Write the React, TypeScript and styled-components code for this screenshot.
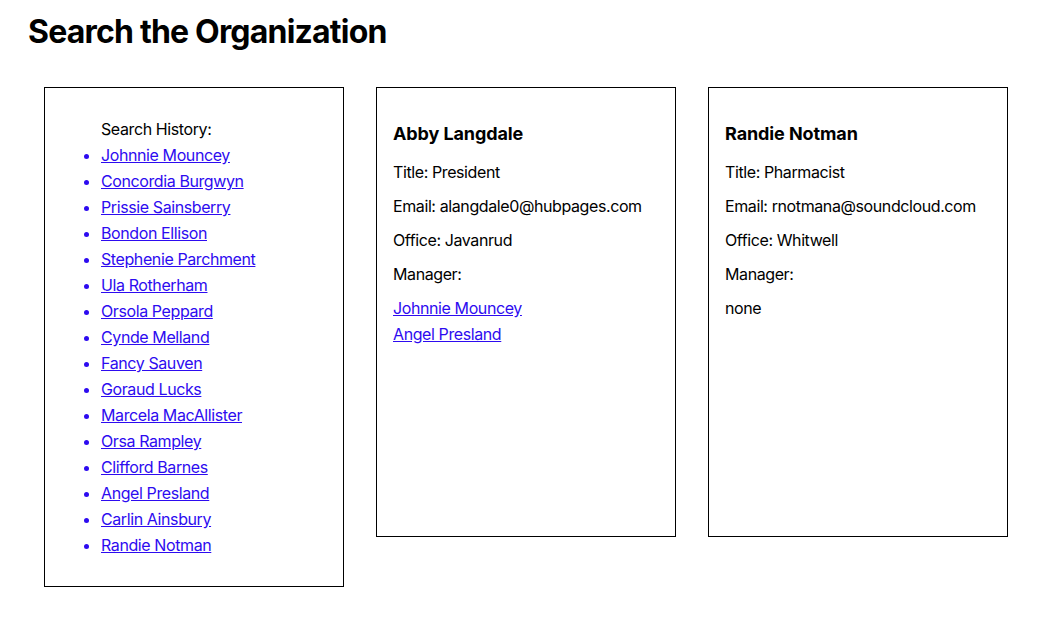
import React from "react";
import styled, { createGlobalStyle } from "styled-components";

interface Employee {
  name: string;
  title: string;
  email: string;
  office: string;
  managers: string[];
}

const history = [
  "Johnnie Mouncey",
  "Concordia Burgwyn",
  "Prissie Sainsberry",
  "Bondon Ellison",
  "Stephenie Parchment",
  "Ula Rotherham",
  "Orsola Peppard",
  "Cynde Melland",
  "Fancy Sauven",
  "Goraud Lucks",
  "Marcela MacAllister",
  "Orsa Rampley",
  "Clifford Barnes",
  "Angel Presland",
  "Carlin Ainsbury",
  "Randie Notman",
];

const employees: Employee[] = [
  {
    name: "Abby Langdale",
    title: "President",
    email: "alangdale0@hubpages.com",
    office: "Javanrud",
    managers: ["Johnnie Mouncey", "Angel Presland"],
  },
  {
    name: "Randie Notman",
    title: "Pharmacist",
    email: "rnotmana@soundcloud.com",
    office: "Whitwell",
    managers: [],
  },
];

const GlobalStyle = createGlobalStyle`
  body {
    margin: 0;
    background: #ffffff;
    color: #000000;
    font-family: Inter, "Noto Sans", sans-serif;
    font-size: 16px;
    letter-spacing: -0.4px;
  }
`;

const Page = styled.div`
  padding: 12px 28px;
`;

const Heading = styled.h1`
  margin: 0 0 35px;
  font-size: 32px;
  line-height: 40px;
  font-weight: 700;
  letter-spacing: -0.8px;
`;

const CardRow = styled.div`
  display: flex;
  align-items: flex-start;
  gap: 32px;
  padding-left: 16px;
`;

const Card = styled.div<{ $height: number }>`
  box-sizing: border-box;
  width: 300px;
  height: ${(p) => p.$height}px;
  border: 1px solid #000000;
  padding: 17px 16px 16px;
`;

const HistoryList = styled.ul`
  margin: 11px 0 0;
  padding-left: 40px;
  line-height: 26px;
`;

const HistoryLabel = styled.li`
  list-style: none;
`;

const HistoryItem = styled.li`
  &::marker {
    color: #2d0bf0;
  }
`;

const Link = styled.a`
  color: #2d0bf0;
  text-decoration: underline;
  cursor: pointer;
`;

const Name = styled.h3`
  margin: 16px 0 12px;
  font-size: 18px;
  line-height: 26px;
  font-weight: 700;
  letter-spacing: -0.1px;
`;

const Field = styled.p`
  margin: 8px 0;
  line-height: 26px;
`;

const ManagerLinks = styled.div`
  display: flex;
  flex-direction: column;
  align-items: flex-start;
  line-height: 26px;
`;

const EmployeeCard = ({ employee }: { employee: Employee }) => (
  <Card $height={450}>
    <Name>{employee.name}</Name>
    <Field>Title: {employee.title}</Field>
    <Field>Email: {employee.email}</Field>
    <Field>Office: {employee.office}</Field>
    <Field>Manager:</Field>
    {employee.managers.length > 0 ? (
      <ManagerLinks>
        {employee.managers.map((m) => (
          <Link key={m}>{m}</Link>
        ))}
      </ManagerLinks>
    ) : (
      <Field>none</Field>
    )}
  </Card>
);

const App = () => (
  <>
    <GlobalStyle />
    <Page>
      <Heading>Search the Organization</Heading>
      <CardRow>
        <Card $height={500}>
          <HistoryList>
            <HistoryLabel>Search History:</HistoryLabel>
            {history.map((h) => (
              <HistoryItem key={h}>
                <Link>{h}</Link>
              </HistoryItem>
            ))}
          </HistoryList>
        </Card>
        {employees.map((e) => (
          <EmployeeCard key={e.name} employee={e} />
        ))}
      </CardRow>
    </Page>
  </>
);

export default App;
